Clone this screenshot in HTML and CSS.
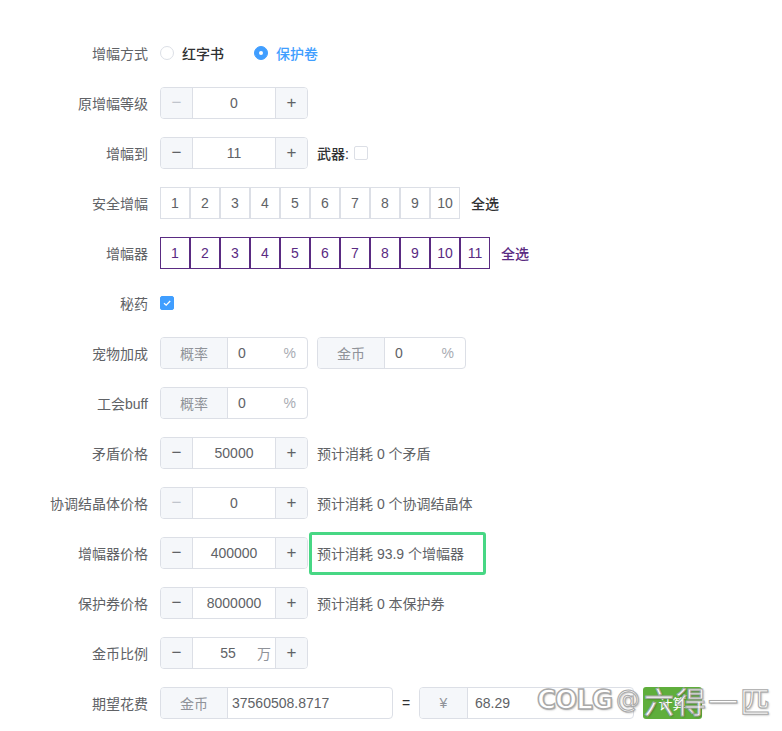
FILE: index.html
```html
<!DOCTYPE html>
<html lang="zh">
<head>
<meta charset="utf-8">
<title>增幅计算</title>
<link rel="stylesheet" href="styles.css">
</head>
<body>
<div class="form">
  <div class="row">
    <div class="label">增幅方式</div>
    <div class="radios">
      <span class="radio"><span class="radio-dot"></span><span class="radio-text">红字书</span></span>
      <span class="radio checked"><span class="radio-dot"></span><span class="radio-text">保护卷</span></span>
    </div>
  </div>

  <div class="row">
    <div class="label">原增幅等级</div>
    <div class="num">
      <span class="num-btn disabled">−</span>
      <span class="num-val">0</span>
      <span class="num-btn">+</span>
    </div>
  </div>

  <div class="row">
    <div class="label">增幅到</div>
    <div class="num">
      <span class="num-btn">−</span>
      <span class="num-val">11</span>
      <span class="num-btn">+</span>
    </div>
    <span class="inline-label">武器:</span>
    <span class="check"></span>
  </div>

  <div class="row">
    <div class="label">安全增幅</div>
    <div class="boxes">
      <span class="box">1</span><span class="box">2</span><span class="box">3</span><span class="box">4</span><span class="box">5</span><span class="box">6</span><span class="box">7</span><span class="box">8</span><span class="box">9</span><span class="box">10</span>
    </div>
    <span class="select-all">全选</span>
  </div>

  <div class="row">
    <div class="label">增幅器</div>
    <div class="boxes purple">
      <span class="box">1</span><span class="box">2</span><span class="box">3</span><span class="box">4</span><span class="box">5</span><span class="box">6</span><span class="box">7</span><span class="box">8</span><span class="box">9</span><span class="box">10</span><span class="box">11</span>
    </div>
    <span class="select-all purple-text">全选</span>
  </div>

  <div class="row">
    <div class="label">秘药</div>
    <span class="check checked">
      <svg width="10" height="10" viewBox="0 0 10 10"><path d="M2 5.2 L4.2 7.2 L8.2 3" fill="none" stroke="#fff" stroke-width="1.3"/></svg>
    </span>
  </div>

  <div class="row">
    <div class="label">宠物加成</div>
    <div class="group">
      <span class="addon">概率</span>
      <span class="gval">0</span>
      <span class="suffix">%</span>
    </div>
    <div class="group ml">
      <span class="addon">金币</span>
      <span class="gval">0</span>
      <span class="suffix">%</span>
    </div>
  </div>

  <div class="row">
    <div class="label">工会buff</div>
    <div class="group">
      <span class="addon">概率</span>
      <span class="gval">0</span>
      <span class="suffix">%</span>
    </div>
  </div>

  <div class="row">
    <div class="label">矛盾价格</div>
    <div class="num">
      <span class="num-btn">−</span>
      <span class="num-val">50000</span>
      <span class="num-btn">+</span>
    </div>
    <span class="hint">预计消耗 0 个矛盾</span>
  </div>

  <div class="row">
    <div class="label">协调结晶体价格</div>
    <div class="num">
      <span class="num-btn disabled">−</span>
      <span class="num-val">0</span>
      <span class="num-btn">+</span>
    </div>
    <span class="hint">预计消耗 0 个协调结晶体</span>
  </div>

  <div class="row">
    <div class="label">增幅器价格</div>
    <div class="num">
      <span class="num-btn">−</span>
      <span class="num-val">400000</span>
      <span class="num-btn">+</span>
    </div>
    <span class="hint highlighted">预计消耗 93.9 个增幅器</span>
  </div>

  <div class="row">
    <div class="label">保护券价格</div>
    <div class="num">
      <span class="num-btn">−</span>
      <span class="num-val">8000000</span>
      <span class="num-btn">+</span>
    </div>
    <span class="hint">预计消耗 0 本保护券</span>
  </div>

  <div class="row">
    <div class="label">金币比例</div>
    <div class="num">
      <span class="num-btn">−</span>
      <span class="num-val with-unit"><span class="unit-val">55</span><span class="unit">万</span></span>
      <span class="num-btn">+</span>
    </div>
  </div>

  <div class="row">
    <div class="label">期望花费</div>
    <div class="group cost">
      <span class="addon">金币</span>
      <span class="gval">37560508.8717</span>
    </div>
    <span class="equals">=</span>
    <div class="group yen">
      <span class="addon">¥</span>
      <span class="gval">68.29</span>
    </div>
    <span class="btn">计算</span>
  </div>
</div>
<div class="watermark"><span class="wm-logo">COLG</span><span class="wm-at">@</span><span class="wm-text">六得一匹</span></div>
</body>
</html>
```
FILE: styles.css
```css
* { box-sizing: border-box; }
html, body { margin: 0; padding: 0; background: #fff; }
body {
  font-family: "Liberation Sans", "Noto Sans CJK SC", sans-serif;
  font-size: 14px;
  color: #606266;
  width: 782px;
  height: 731px;
  overflow: hidden;
  position: relative;
}
.form { padding-top: 37px; }
.row {
  display: flex;
  align-items: center;
  height: 32px;
  margin-bottom: 18px;
}
.label {
  width: 160px;
  padding-right: 12px;
  text-align: right;
  color: #606266;
  flex-shrink: 0;
}
.radios { display: flex; align-items: center; }
.radio { display: inline-flex; align-items: center; margin-right: 30px; font-weight: 500; color: #303133; }
.radio-dot {
  width: 14px; height: 14px; border-radius: 50%;
  border: 1px solid #dcdfe6; background: #fff;
  display: inline-flex; align-items: center; justify-content: center;
}
.radio-text { margin-left: 8px; }
.radio.checked .radio-dot { background: #409eff; border-color: #409eff; }
.radio.checked .radio-dot::after {
  content: ""; width: 4px; height: 4px; border-radius: 50%; background: #fff;
}
.radio.checked .radio-text { color: #409eff; }

.num {
  display: flex;
  width: 148px;
  height: 32px;
  border: 1px solid #dcdfe6;
  border-radius: 4px;
  overflow: hidden;
}
.num-btn {
  width: 32px;
  background: #f5f7fa;
  color: #606266;
  font-size: 17px;
  display: flex; align-items: center; justify-content: center;
}
.num-btn:first-child { border-right: 1px solid #dcdfe6; }
.num-btn:last-child { border-left: 1px solid #dcdfe6; }
.num-btn.disabled { color: #c0c4cc; }
.num-val {
  flex: 1;
  display: flex; align-items: center; justify-content: center;
  color: #606266;
}
.with-unit { justify-content: flex-start; padding-left: 6px; }
.unit-val { flex: 1; text-align: center; }
.unit { color: #909399; margin-right: 4px; }

.inline-label { margin-left: 9px; color: #303133; font-weight: 500; }
.check {
  width: 14px; height: 14px;
  border: 1px solid #dcdfe6; border-radius: 2px;
  background: #fff;
  display: inline-flex; align-items: center; justify-content: center;
}
.inline-label + .check { margin-left: 5px; }
.check.checked { background: #409eff; border-color: #409eff; }

.boxes { display: flex; }
.box {
  width: 30px; height: 32px;
  border: 1px solid #dcdfe6;
  display: flex; align-items: center; justify-content: center;
  color: #606266;
}
.boxes.purple .box { border-color: #5a2b82; color: #5a2b82; }
.select-all { margin-left: 11px; color: #303133; font-weight: 500; }
.purple-text { color: #5a2b82; }

.group {
  display: flex;
  height: 32px;
  width: 148px;
  border: 1px solid #dcdfe6;
  border-radius: 4px;
  overflow: hidden;
}
.group.ml { margin-left: 9px; width: 149px; }
.addon {
  width: 67px;
  background: #f5f7fa;
  border-right: 1px solid #dcdfe6;
  color: #909399;
  display: flex; align-items: center; justify-content: center;
  flex-shrink: 0;
}
.gval { flex: 1; display: flex; align-items: center; padding-left: 10px; color: #606266; }
.suffix { display: flex; align-items: center; padding-right: 11px; color: #a8abb2; }

.hint { margin-left: 9px; color: #606266; }
.highlighted { position: relative; }
.highlighted::after {
  content: "";
  position: absolute;
  left: -8px; right: -22px; top: -11px; bottom: -12px;
  border: 3px solid #47d784;
  border-radius: 3px;
}

.cost { width: 233px; }
.cost .gval { padding-left: 4px; }
.equals { width: 26px; text-align: center; color: #303133; }
.yen { width: 215px; }
.yen .addon { width: 48px; }
.yen .gval { padding-left: 7px; }
.btn {
  margin-left: 9px;
  width: 59px; height: 32px;
  background: #5fae3c;
  color: #fff;
  border-radius: 3px;
  display: flex; align-items: center; justify-content: center;
}

.watermark {
  position: absolute;
  left: 537px;
  top: 678px;
  display: flex;
  align-items: center;
  color: #fff;
  pointer-events: none;
  white-space: nowrap;
}
.wm-logo {
  font-family: "DejaVu Sans", sans-serif;
  font-weight: bold;
  font-size: 26px;
  letter-spacing: -1px;
  -webkit-text-stroke: 1.5px #a9a9a9;
  text-shadow: 1px 1px 2px rgba(0,0,0,0.35);
}
.wm-at {
  margin-left: 4px;
  font-family: "DejaVu Sans", sans-serif;
  font-size: 24px;
  -webkit-text-stroke: 1px #a9a9a9;
  text-shadow: 1px 1px 2px rgba(0,0,0,0.3);
}
.wm-text {
  margin-left: 4px;
  font-family: "Noto Sans CJK SC", sans-serif;
  font-size: 30px;
  letter-spacing: 2px;
  -webkit-text-stroke: 1px #a9a9a9;
  text-shadow: 1px 1px 2px rgba(0,0,0,0.3);
}
```
